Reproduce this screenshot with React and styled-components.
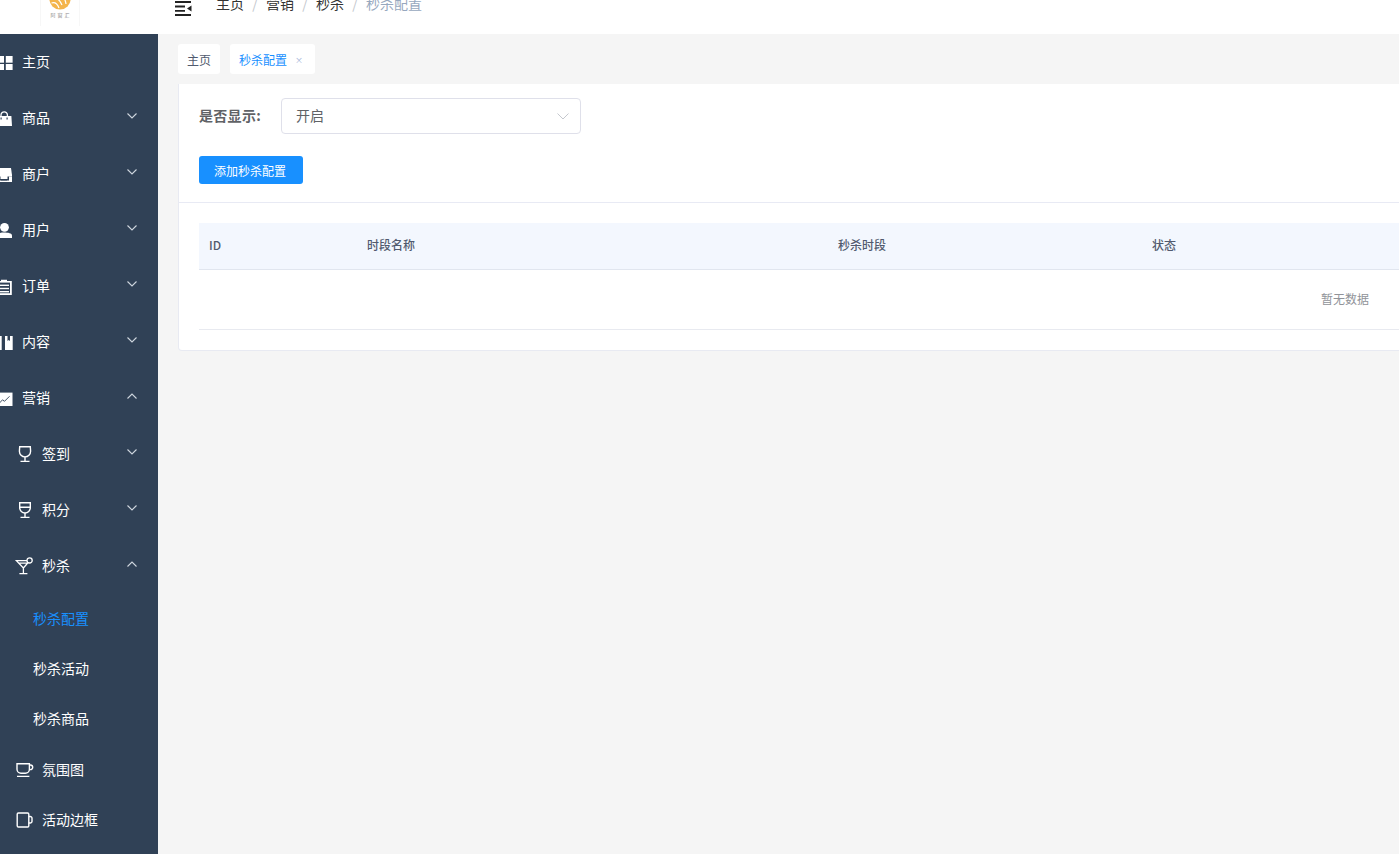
import React from "react";
import styled, { createGlobalStyle } from "styled-components";

const Global = createGlobalStyle`
  html, body { margin: 0; padding: 0; height: 100%; overflow: hidden; background: #f5f5f5; }
  body { font-family: "Noto Sans CJK SC", "Liberation Sans", sans-serif; }
  #root { height: 100%; }
`;

const Page = styled.div`
  display: flex;
  flex-direction: column;
  height: 100vh;
  overflow: hidden;
`;
const Header = styled.header`
  flex: none;
  height: 60px;
  margin-top: -26px;
  background: #fff;
  display: flex;
  align-items: center;
  padding-left: 40px;
`;
const LogoBox = styled.div`
  width: 40px;
  height: 52px;
  align-self: flex-start;
  box-sizing: border-box;
  border-left: 1px solid #f7f7f7;
  border-right: 1px solid #f7f7f7;
  display: flex;
  flex-direction: column;
  align-items: center;
  justify-content: flex-end;
  padding-bottom: 8px;
  margin-right: 95px;
`;
const LogoText = styled.span`
  font-size: 5px;
  line-height: 6px;
  letter-spacing: 2px;
  margin-right: -2px;
  color: #8d8d8d;
  margin-top: 2px;
`;
const Toggle = styled.svg`
  width: 17px;
  height: 15px;
  margin-right: 24px;
  display: block;
  position: relative;
  top: 4px;
`;
const Crumbs = styled.nav`
  display: flex;
  align-items: center;
  font-size: 14px;
  line-height: 20px;
  padding-bottom: 2px;
  color: #515a6e;
`;
const Crumb = styled.span`
  color: ${(p) => (p.$last ? "#97a8be" : "#333")};
`;
const Sep = styled.span`
  width: 22px;
  text-align: center;
  color: #c5c8ce;
`;
const Body = styled.div`
  flex: 1;
  min-height: 0;
  display: flex;
`;
const Side = styled.aside`
  flex: none;
  width: 176px;
  margin-left: -18px;
  background: #304156;
  color: #fff;
  font-size: 14px;
  overflow: hidden;
`;
const Row = styled.div`
  height: ${(p) => (p.$h ? p.$h : 56)}px;
  display: flex;
  align-items: center;
  box-sizing: border-box;
  padding-left: ${(p) => (p.$level === 2 ? 35 : p.$level === 3 ? 51 : 14)}px;
  color: ${(p) => (p.$active ? "#1890ff" : "#fff")};
  line-height: 20px;
`;
const Label = styled.span`
  flex: 1;
  margin-left: ${(p) => (p.$plain ? 0 : p.$level === 2 ? 9 : 10)}px;
  margin-bottom: 2px;
  white-space: nowrap;
`;
const IconSvg = styled.svg`
  width: 16px;
  height: 16px;
  flex: none;
  display: block;
  fill: none;
  overflow: visible;
`;
const Chevron = styled.svg`
  width: 10px;
  height: 6px;
  flex: none;
  margin-right: 21px;
  position: relative;
  top: -2px;
`;
const Main = styled.main`
  flex: 1;
  min-width: 0;
  background: #f5f5f5;
  padding: 10px 0 0 20px;
  overflow: hidden;
`;
const Tabs = styled.div`
  display: flex;
  gap: 10px;
  margin-bottom: 10px;
`;
const Tab = styled.div`
  height: 30px;
  box-sizing: border-box;
  background: #fff;
  border-radius: 3px;
  display: flex;
  align-items: center;
  padding: 0 9px;
  font-size: 12px;
  color: ${(p) => (p.$active ? "#1890ff" : "#515a6e")};
`;
const TabClose = styled.span`
  display: inline-block;
  width: 6px;
  margin-left: 8px;
  margin-right: 5px;
  text-align: center;
  font-size: 8px;
  color: #9db0d6;
`;
const Card = styled.section`
  width: 2334px;
  box-sizing: border-box;
  background: #fff;
  border: 1px solid #e8eaf2;
  border-top: 0;
  border-radius: 0 0 4px 4px;
`;
const Filters = styled.div`
  padding: 14px 20px 18px;
  border-bottom: 1px solid #e8eaf4;
`;
const Field = styled.div`
  display: flex;
  align-items: center;
  margin-bottom: 22px;
`;
const FieldLabel = styled.label`
  width: 82px;
  font-size: 14px;
  font-weight: 700;
  letter-spacing: 0.3px;
  color: #606266;
  padding-bottom: 2px;
`;
const Select = styled.div`
  width: 300px;
  height: 36px;
  box-sizing: border-box;
  border: 1px solid #dfe0ea;
  border-radius: 4px;
  display: flex;
  align-items: center;
  justify-content: space-between;
  padding: 0 11px 2px 14px;
  font-size: 14px;
  color: #606266;
`;
const SelectArrow = styled.svg`
  position: relative;
  top: 1px;
`;
const Button = styled.button`
  display: block;
  width: 104px;
  height: 28px;
  border: 0;
  border-radius: 3px;
  background: #1890ff;
  color: #fff;
  font: inherit;
  font-size: 12px;
  padding: 0 2px 0 0;
`;
const TableWrap = styled.div`
  padding: 20px 20px 20px;
`;
const TableHead = styled.div`
  display: grid;
  grid-template-columns: 168px 471px 314px 1fr;
  height: 46px;
  align-items: center;
  background: #f3f7fe;
  border-bottom: 1px solid #e1e6ef;
  font-size: 12px;
  font-weight: 500;
  color: #515a6e;
`;
const HeadCell = styled.div`
  padding-left: ${(p) => (p.$first ? 10 : 0)}px;
  padding-bottom: 3px;
`;
const EmptyRow = styled.div`
  height: 60px;
  display: flex;
  align-items: center;
  justify-content: center;
  border-bottom: 1px solid #e8eaf0;
  font-size: 12px;
  color: #909399;
  padding-bottom: 2px;
  box-sizing: border-box;
`;

const Shape = ({ children }) => (
  <IconSvg viewBox="0 0 16 16">{children}</IconSvg>
);

const D = "#304156";
const icons = {
  home: (
    <Shape>
      <rect x="0" y="2" width="8" height="6.7" fill="#fff" />
      <rect x="9.8" y="2" width="6.8" height="6.7" fill="#fff" />
      <rect x="0" y="10" width="8" height="6" fill="#fff" />
      <rect x="9.8" y="10" width="6.8" height="6" fill="#fff" />
    </Shape>
  ),
  bag: (
    <Shape>
      <path d="M5 6V5a3.2 3.2 0 0 1 6.4 0v1" stroke="#fff" strokeWidth="1.3" />
      <path d="M1 6h14.4l.6 10H0z" fill="#fff" />
      <rect x="4.5" y="7.5" width="1.2" height="2" fill={D} />
      <rect x="10.5" y="7.5" width="1.2" height="2" fill={D} />
    </Shape>
  ),
  store: (
    <Shape>
      <path d="M1 2h14l1 7v7H0V9z" fill="#fff" />
      <path d="M0 10.6h4.5v2.4h7v-2.4H16v.1h-3v3.7H3v-3.7H0z" fill={D} />
      <rect x="5" y="13.4" width="6" height="1" fill={D} />
    </Shape>
  ),
  user: (
    <Shape>
      <circle cx="8.5" cy="5.3" r="4.4" fill="#fff" />
      <path d="M0 16v-2.2c0-2.6 4-3.2 8-3.2s8 .6 8 3.2V16z" fill="#fff" />
    </Shape>
  ),
  order: (
    <Shape>
      <path d="M1 3h4V1.8h6V3h4.8v14H1z" fill="#fff" />
      <rect x="3" y="4.6" width="11" height="10.6" fill={D} />
      <rect x="4" y="6.6" width="9" height="1.4" fill="#fff" />
      <rect x="4" y="9.8" width="9" height="1.4" fill="#fff" />
      <rect x="4" y="13" width="9" height="1.4" fill="#fff" />
    </Shape>
  ),
  book: (
    <Shape>
      <path d="M0 2h16.7v14H0z" fill="#fff" />
      <path d="M5.7 2H9v14H5.7z" fill={D} />
      <path d="M11.5 2H14v5l-1.25-1-1.25 1z" fill={D} />
    </Shape>
  ),
  chart: (
    <Shape>
      <rect x="0" y="2.6" width="16.5" height="13.4" fill="#fff" />
      <path d="M3.5 13l3-3.2 2 1.5 5-5" stroke={D} strokeWidth="0.9" />
    </Shape>
  ),
  wine: (
    <Shape>
      <path d="M2.7.7h10.6l.3 4.6a5.6 5.6 0 0 1-11.2 0z" stroke="#fff" strokeWidth="1.4" />
      <path d="M8 11v4M3.5 15.4h9" stroke="#fff" strokeWidth="1.4" />
    </Shape>
  ),
  glass: (
    <Shape>
      <path d="M2.7.7h10.6v5a5.3 5.3 0 0 1-10.6 0z" stroke="#fff" strokeWidth="1.4" />
      <path d="M2.7 5.3h10.6M8 11v4M3.5 15.4h9" stroke="#fff" strokeWidth="1.4" />
    </Shape>
  ),
  cocktail: (
    <Shape>
      <path d="M-.6 2.6h13.4L6.4 10zM1.8 5.2h8.6M6.4 10v5M2.4 15.6h8" stroke="#fff" strokeWidth="1.3" />
      <circle cx="12.6" cy="2.4" r="2.6" fill={D} stroke="#fff" strokeWidth="1.3" />
    </Shape>
  ),
  cup: (
    <Shape>
      <path d="M0 1.8h12.4v5.4a4 4 0 0 1-4 4H4a4 4 0 0 1-4-4z" stroke="#fff" strokeWidth="1.4" />
      <path d="M12.4 3h1a2.2 2.2 0 0 1 0 4.6h-1M0 14.4h12.4" stroke="#fff" strokeWidth="1.4" />
    </Shape>
  ),
  mug: (
    <Shape>
      <rect x="0.2" y="1" width="11.6" height="14" rx="1.2" stroke="#fff" strokeWidth="1.4" />
      <path d="M11.8 4.5h1.4A1.8 1.8 0 0 1 15 6.3v2.9A1.8 1.8 0 0 1 13.2 11h-1.4" stroke="#fff" strokeWidth="1.4" />
    </Shape>
  ),
};

const Arrow = ({ up }) => (
  <Chevron viewBox="0 0 10 6">
    <path
      d={up ? "M.5 5.5L5 1l4.5 4.5" : "M.5.5L5 5 9.5.5"}
      fill="none"
      stroke="#cfd6de"
      strokeWidth="1.1"
    />
  </Chevron>
);

const menu = [
  { icon: "home", label: "主页" },
  { icon: "bag", label: "商品", arrow: "down" },
  { icon: "store", label: "商户", arrow: "down" },
  { icon: "user", label: "用户", arrow: "down" },
  { icon: "order", label: "订单", arrow: "down" },
  { icon: "book", label: "内容", arrow: "down" },
  { icon: "chart", label: "营销", arrow: "up" },
  { icon: "wine", label: "签到", arrow: "down", level: 2 },
  { icon: "glass", label: "积分", arrow: "down", level: 2 },
  { icon: "cocktail", label: "秒杀", arrow: "up", level: 2 },
  { label: "秒杀配置", level: 3, h: 50, active: true },
  { label: "秒杀活动", level: 3, h: 50 },
  { label: "秒杀商品", level: 3, h: 50 },
  { icon: "cup", label: "氛围图", level: 2, h: 51 },
  { icon: "mug", label: "活动边框", level: 2, h: 50 },
];

export default function App() {
  return (
    <Page>
      <Global />
      <Header>
        <LogoBox>
          <svg width="22" height="22" viewBox="0 0 22 22" style={{ display: "block" }}>
            <circle cx="11" cy="11" r="10.6" fill="#f4b54c" />
            <path d="M1 10c4-2 9 0 12 7M2.5 15c3-1 6 1 7.5 5M8 5c4 0 8 4 9 11M13 4c3 1 5 3 7 7" fill="none" stroke="#fff" strokeWidth="1.2" />
          </svg>
          <LogoText>阿窗汇</LogoText>
        </LogoBox>
        <Toggle viewBox="0 0 17 15">
          <path d="M0 1h16M0 14h16M0 5.5h10M0 9.8h10" stroke="#222" strokeWidth="1.8" fill="none" />
          <path d="M16.5 4.5v6L12 7.5z" fill="#222" />
        </Toggle>
        <Crumbs>
          <Crumb>主页</Crumb>
          <Sep>/</Sep>
          <Crumb>营销</Crumb>
          <Sep>/</Sep>
          <Crumb>秒杀</Crumb>
          <Sep>/</Sep>
          <Crumb $last>秒杀配置</Crumb>
        </Crumbs>
      </Header>
      <Body>
        <Side>
          {menu.map((m) => (
            <Row key={m.label} $level={m.level} $h={m.h} $active={m.active}>
              {m.icon && icons[m.icon]}
              <Label $plain={!m.icon} $level={m.level}>{m.label}</Label>
              {m.arrow && <Arrow up={m.arrow === "up"} />}
            </Row>
          ))}
        </Side>
        <Main>
          <Tabs>
            <Tab>主页</Tab>
            <Tab $active>
              秒杀配置
              <TabClose>×</TabClose>
            </Tab>
          </Tabs>
          <Card>
            <Filters>
              <Field>
                <FieldLabel>是否显示:</FieldLabel>
                <Select>
                  开启
                  <SelectArrow width="12" height="7" viewBox="0 0 12 7">
                    <path d="M.5.5L6 6 11.5.5" fill="none" stroke="#c5c8ce" strokeWidth="1" />
                  </SelectArrow>
                </Select>
              </Field>
              <Button>添加秒杀配置</Button>
            </Filters>
            <TableWrap>
              <TableHead>
                <HeadCell $first>ID</HeadCell>
                <HeadCell>时段名称</HeadCell>
                <HeadCell>秒杀时段</HeadCell>
                <HeadCell>状态</HeadCell>
              </TableHead>
              <EmptyRow>暂无数据</EmptyRow>
            </TableWrap>
          </Card>
        </Main>
      </Body>
    </Page>
  );
}
